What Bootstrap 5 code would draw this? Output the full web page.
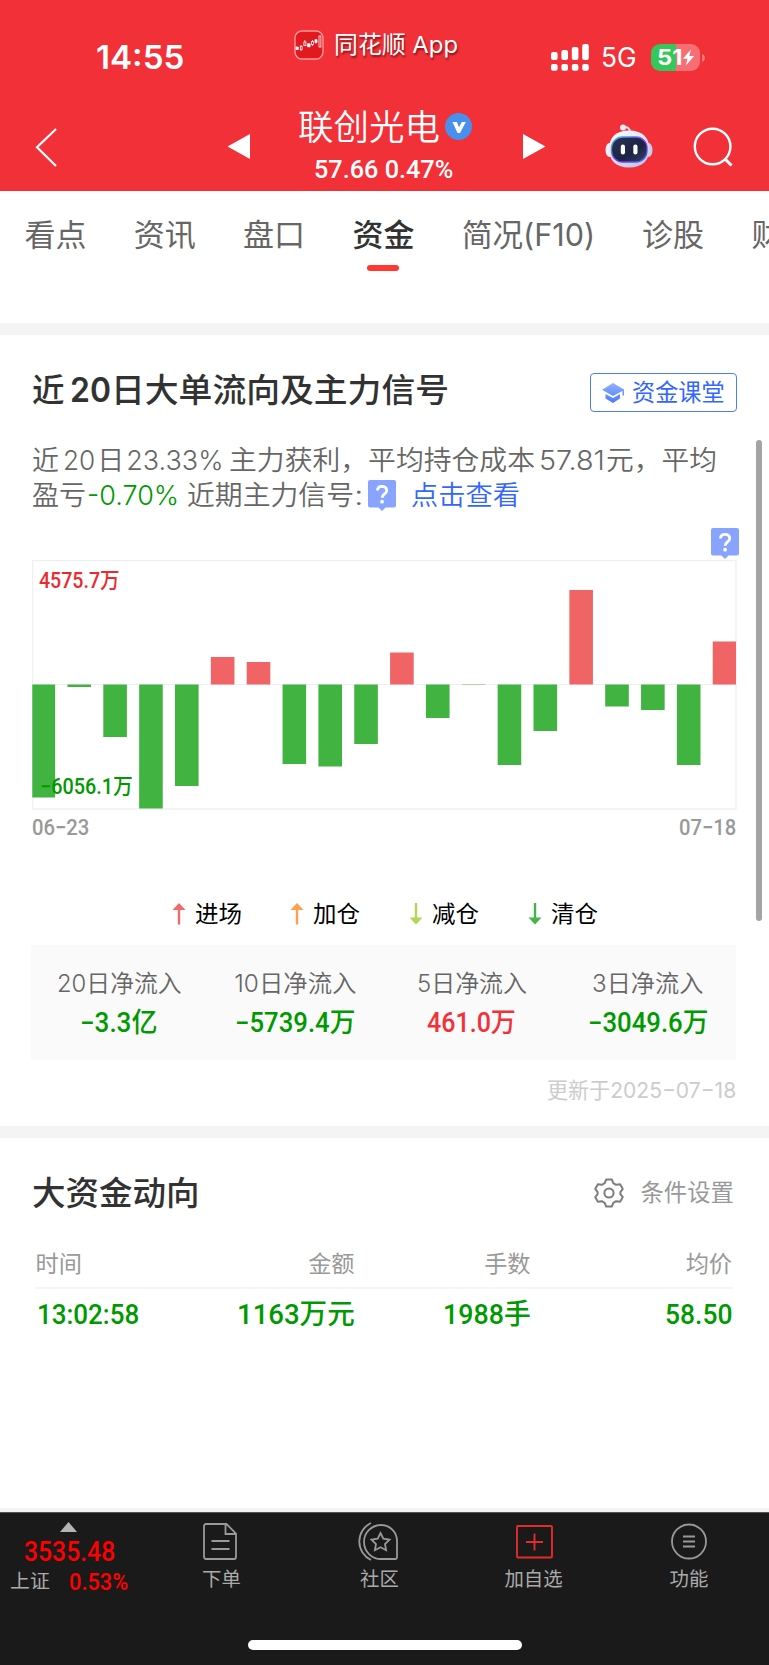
<!DOCTYPE html>
<html lang="zh-CN">
<head>
<meta charset="utf-8">
<meta name="viewport" content="width=device-width, initial-scale=1">
<title>联创光电 - 资金</title>
<link href="https://cdn.jsdelivr.net/npm/bootstrap@5.3.0/dist/css/bootstrap.min.css" rel="stylesheet">
<style>
  :root { --up:#f23038; --down:#009900; --line:#f3f3f3; --link:#3366ff; }
  body { font-family:Inter,"Noto Sans CJK SC",sans-serif; color:#323232; background:#fff; width:769px; height:1665px; overflow:hidden; }
  svg { display:block; flex:none; }
  .din { font-family:Roboto,"Noto Sans CJK SC",sans-serif; font-weight:500; }
  .fit { display:inline-block; white-space:nowrap; line-height:1; }
  .fit > span { display:inline-block; transform-origin:0 50%; }
  .up { color:var(--up); } .down { color:var(--down); }

  .top-area { background:#f23038; height:191px; }
  .status { height:100px; }
  .clock { font-size:32px; font-weight:600; padding:42px 0 0 96px; width:294px; line-height:32px; }
  .app-name { font-size:23.5px; line-height:30px; padding-top:30px; width:257px; text-shadow:1px 2px 2px rgba(60,0,0,.6); }
  .app-name svg { margin-right:9.5px; }
  .net { font-size:27px; line-height:28px; padding-top:44px; }
  .battery { width:49px; height:27px; border-radius:9px; background:linear-gradient(90deg,#34c759 51%,rgba(255,255,255,.3) 51%); font-size:21px; font-weight:700; line-height:27px; margin-left:14px; padding-left:6px; }
  .title-row { height:91px; }
  .title-row > svg { margin-top:3px; }
  .stock { width:273px; }
  .stock-name { font-size:35.5px; font-weight:350; line-height:44px; height:52px; padding:3px 0 0 48px; }
  .quote { font-size:26.5px; height:32px; padding:2px 0 0 64px; }

  .tabs { height:132px; padding:25.5px 0 0 24.5px; gap:47.3px; font-size:31px; color:#666; overflow:hidden; }
  .tabs > div { height:55px; line-height:36px; flex:none; position:relative; }
  .tabs .active { color:#323232; font-weight:500; }
  .tabs .active::after { content:""; display:block; width:32px; height:6px; border-radius:3px; background:#ff3830; margin:12.5px auto 0; }
  .band { height:11.5px; background:#f4f4f4; }

  .flow { height:791.5px; padding:38px 33px 0 32px; }
  .sec-title { font-size:33.5px; font-weight:500; line-height:40px; }
  .flow .sec-title { margin-top:-3px; }
  .course { width:147px; height:39px; border:1.3px solid #4d7bff; border-radius:4px; color:var(--link); font-size:23.4px; padding:1px 0 0 11px; margin-right:-.6px; }
  .summary { height:71px; margin-top:31px; font-size:27px; line-height:35.5px; color:#666; font-weight:350; }
  .summary > div { height:35.5px; }
  .chart { height:250px; margin-top:46.5px; position:relative; }
  .chart .hi, .chart .lo { position:absolute; left:7px; font-size:21.5px; }
  .chart .hi { top:5px; } .chart .lo { top:210.5px; left:8px; }
  .tip { position:absolute; right:-2.5px; top:-32px; }
  .dates { font-size:22px; color:#999; height:28px; margin-top:4px; margin-bottom:1px; }
  .legend { height:30px; margin:57px 0 0 139.5px; font-size:23px; color:#000; }
  .legend > div { width:118.7px; flex:none; gap:9px; }
  .totals { background:#fafafa; height:114.5px; margin-top:16px; padding-top:21.5px; margin-left:-1px; }
  .totals .lbl { font-size:24.4px; line-height:32px; height:34px; color:#666; font-weight:350; }
  .totals .val { font-size:27px; height:36px; padding-top:2px; }
  .updated { color:#ccc; font-size:21.5px; height:30px; margin-top:16.5px; }

  .moves { height:370px; padding:35px 33px 0 32px; }
  .gear-txt { font-size:23.4px; color:#999; margin:0 2px 0 15px; }
  .grid-head { height:47px; margin:29px 3px 0 2.5px; color:#999; font-size:23.2px; border-bottom:2px solid #f6f6f6; padding:1px 1px 1px; }
  .grid-body { font-size:28px; height:51px; color:var(--down); padding:2px 4px 0 3.5px; }
  .c1 { width:143.5px; } .c2 { width:175.5px; } .c3 { width:176px; }

  .dock { background:#1a1a1a; height:153px; color:#aaa; font-size:19.4px; border-top:1px solid #555; position:relative; }
  .index { width:138px; }
  .dock .item { padding-top:9px; }
  .dock .item .cap { line-height:24px; margin-top:5px; }
  .home-bar { position:absolute; left:247.5px; top:126.5px; width:274px; height:10px; border-radius:5px; background:#fff; }
  .scroll-thumb { position:absolute; left:756px; top:439.5px; width:6px; height:481.5px; border-radius:3px; background:#a4a4a4; }
</style>
</head>
<body class="position-relative">

<header class="top-area text-white">
  <div class="status d-flex align-items-start">
    <div class="clock"><span class="fit" data-w="88"><span>14:55</span></span></div>
    <div class="app-name d-flex align-items-center">
      <svg width="30" height="30" viewBox="0 0 30 30"><rect x="1" y="1" width="28" height="28" rx="7" fill="#e2191f" stroke="#f99" stroke-width="1.4"/><g fill="#fff" stroke="#fff" stroke-width=".8"><path d="M2 17h2.3v2.5H2zM13.500 13.800h2.600v3h-2.600zM21 9.600h2v3.200h-2z"/><path d="M7 15v6M10.800 10v6M18.500 10v6" fill="none"/><rect x="6.300" y="16.500" width="1.800" height="3" fill="#e0161d"/><rect x="9.900" y="12" width="2" height="3.600" fill="#e0161d"/><rect x="17.500" y="11.500" width="1.900" height="3" fill="#e0161d"/><rect x="25" y="6" width="1.900" height="11" fill="#e0161d"/></g></svg>
      <span class="fit" data-w="124"><span>同花顺 App</span></span>
    </div>
    <div class="net d-flex align-items-center">
      <svg width="38" height="27" viewBox="0 0 38 27" fill="#fff"><rect x="0" y="8" width="6.600" height="8" rx="2"/><rect x="10.400" y="6" width="6.600" height="10" rx="2"/><rect x="20.800" y="3" width="6.600" height="13" rx="2"/><rect x="31.200" y="0" width="6.600" height="16" rx="2"/><rect x="0" y="20" width="6.600" height="6.800" rx="2"/><rect x="10.400" y="20" width="6.600" height="6.800" rx="2"/><rect x="20.800" y="20" width="6.600" height="6.800" rx="2"/><rect x="31.200" y="20" width="6.600" height="6.800" rx="2"/></svg>
      <span class="fit ms-2 ps-1" data-w="36"><span>5G</span></span>
      <div class="battery d-flex align-items-center"><span class="fit" data-w="25"><span>51</span></span>
        <svg width="13" height="17" viewBox="0 0 13 17"><path d="M9 .5.800 9.800h4.700L3.800 16.500 12.200 7H7.300z" fill="#fff"/></svg></div>
      <svg style="margin-left:2px" width="3" height="8" viewBox="0 0 3 8"><path d="M0 0c4 1.500 4 6.500 0 8z" fill="#fff" fill-opacity=".35"/></svg>
    </div>
  </div>
  <div class="title-row d-flex">
    <svg class="ms-3" width="234" height="80" viewBox="16 103 234 80"><path d="M56 129 37 147.300 56 166" fill="none" stroke="#fff" stroke-width="2.200"/><path d="M227.500 146.500 250 134v25z" fill="#fff"/></svg>
    <div class="stock">
      <div class="stock-name d-flex align-items-center"><span class="fit" data-w="142"><span>联创光电</span></span>
        <svg style="margin:-2px 0 0 5px" width="27" height="27" viewBox="0 0 27 27"><circle cx="13.500" cy="13.500" r="13.500" fill="#4890ec"/><path d="M7.500 9h4.300l2.200 5.300L16.800 9h4L15 20h-2.500z" fill="#fff"/></svg></div>
      <div class="quote din d-flex align-items-center"><span class="fit" data-w="139"><span>57.66 0.47%</span></span></div>
    </div>
    <svg width="230" height="80" viewBox="523 103 230 80">
      <defs><linearGradient id="face" x2="1" y2="1"><stop offset="0" stop-color="#2c3558"/><stop offset=".6" stop-color="#1b2342"/><stop offset="1" stop-color="#39436c"/></linearGradient><linearGradient id="ring" x2="1" y2="1"><stop stop-color="#41c8d8"/><stop offset=".6" stop-color="#7b30e8"/><stop offset="1" stop-color="#3a6cf0"/></linearGradient><linearGradient id="shell" x2=".6" y2="1"><stop stop-color="#fff"/><stop offset="1" stop-color="#c7c9e8"/></linearGradient></defs>
      <path d="M523 134v25l22.500-12.500z" fill="#fff"/>
      <path d="M623 127c4-.5 7 1 7.500 6" fill="none" stroke="#dfe0f3" stroke-width="2"/><circle cx="623" cy="127.500" r="3" fill="#eceaf7"/>
      <ellipse cx="609.500" cy="150" rx="4" ry="7" fill="#efeffb"/><ellipse cx="648.500" cy="150" rx="4" ry="7" fill="#c9cbea"/>
      <path d="M629 130.500c14 0 20.500 8 20.500 18.500s-6.500 18.500-20.500 18.500-20-8-20-18.500 6-18.500 20-18.500z" fill="url(#shell)"/>
      <rect x="611.500" y="137" width="35.500" height="25" rx="11" fill="url(#face)" stroke="url(#ring)" stroke-width="1.300"/>
      <rect x="620.800" y="144.500" width="4.200" height="10" rx="2.100" fill="#fff"/><rect x="633.300" y="144.500" width="4.200" height="10" rx="2.100" fill="#fff"/>
      <circle cx="712.600" cy="146.500" r="17.800" fill="none" stroke="#fff" stroke-width="2.400"/><path d="m724.500 158.500 7 7" stroke="#fff" stroke-width="3"/>
    </svg>
  </div>
</header>

<nav class="tabs d-flex">
  <div>看点</div><div>资讯</div><div>盘口</div><div class="active">资金</div><div><span class="fit" data-w="133"><span>简况(F10)</span></span></div><div>诊股</div><div>财务</div>
</nav>
<div class="band"></div>

<section class="flow">
  <div class="d-flex justify-content-between">
    <div class="sec-title d-flex align-items-center"><span class="fit" data-w="33"><span>近</span></span><span class="fit" style="font-weight:600;margin:0 1px 0 5px" data-w="41"><span>20</span></span><span class="fit" data-w="338"><span>日大单流向及主力信号</span></span></div>
    <div class="course d-flex align-items-center">
      <svg width="22" height="20" viewBox="0 0 22 20"><defs><linearGradient id="cap" x2="0" y2="1"><stop stop-color="#93b0ff"/><stop offset="1" stop-color="#4a7bff"/></linearGradient></defs><path d="M11 0 22 6.500v6h-1.500V8L11 13 0 6.700zM3.500 11l7.500 4 7-4v4.500L11 20l-7.500-4.500z" fill="url(#cap)"/></svg>
      <span class="fit" style="margin-left:8px" data-w="93"><span>资金课堂</span></span>
    </div>
  </div>
  <div class="summary">
    <div class="d-flex align-items-center"><span class="fit" data-w="27"><span>近</span></span><span class="fit" style="margin-left:4px" data-w="32"><span>20</span></span><span class="fit" style="margin-left:2px" data-w="27"><span>日</span></span><span class="fit" data-w="97" style="margin:0 5px 0 2px"><span>23.33%</span></span><span class="fit" data-w="306"><span>主力获利，平均持仓成本</span></span><span class="fit" style="margin-left:4px" data-w="66"><span>57.81</span></span><span class="fit" style="margin-left:2px" data-w="111"><span>元，平均</span></span></div>
    <div class="d-flex align-items-center">
      <span class="fit" data-w="54"><span>盈亏</span></span><span class="fit down" style="margin-left:1px" data-w="92"><span>-0.70%</span></span>
      <span class="fit" style="margin-left:8px" data-w="167"><span>近期主力信号</span></span><span class="fit" data-w="10"><span>:</span></span>
      <svg style="margin-left:4px" width="28" height="31" viewBox="0 0 28 31"><path d="M2 0h24a2 2 0 0 1 2 2v23.500a2 2 0 0 1-2 2h-8.500L14 31l-3.500-3.500H2a2 2 0 0 1-2-2V2a2 2 0 0 1 2-2z" fill="#88a4ff"/><path d="M9.500 10.500C9.500 7.800 11.300 6.300 14 6.300s4.700 1.600 4.700 4.100c0 3.500-4.500 3.600-4.500 7.300" fill="none" stroke="#fff" stroke-width="2.800"/><circle cx="14.100" cy="21.700" r="1.900" fill="#fff"/></svg>
      <span class="fit" style="color:var(--link);margin-left:15px" data-w="109"><span>点击查看</span></span>
    </div>
  </div>

  <div class="chart">
    <svg id="bars" width="705" height="250" viewBox="32 560 705 250"><rect x="32.500" y="560.500" width="703.500" height="248.500" fill="#fff" stroke="#f0f0f0" stroke-width="1.400"/><path d="M32 684.500h704" stroke="#efefef"/></svg>
    <div class="hi din" style="color:#ec2a2e"><span class="fit" data-w="81"><span>4575.7万</span></span></div>
    <div class="lo din down"><span class="fit" data-w="93"><span>−6056.1万</span></span></div>
    <svg class="tip" width="28" height="31" viewBox="0 0 28 31"><path d="M2 0h24a2 2 0 0 1 2 2v23.500a2 2 0 0 1-2 2h-8.500L14 31l-3.500-3.500H2a2 2 0 0 1-2-2V2a2 2 0 0 1 2-2z" fill="#88a4ff"/><path d="M9.500 10.500C9.500 7.800 11.300 6.300 14 6.300s4.700 1.600 4.700 4.100c0 3.500-4.500 3.600-4.500 7.300" fill="none" stroke="#fff" stroke-width="2.800"/><circle cx="14.100" cy="21.700" r="1.900" fill="#fff"/></svg>
  </div>
  <div class="dates din d-flex justify-content-between align-items-center"><span class="fit" data-w="57"><span>06−23</span></span><span class="fit" data-w="57"><span>07−18</span></span></div>

  <div class="legend d-flex">
    <div class="d-flex align-items-center"><svg width="14" height="22" viewBox="0 0 14 22"><path d="M7 0 13.500 7H8.200v14.500H5.800V7H.5z" fill="#f26a6a"/></svg><span class="fit" data-w="47"><span>进场</span></span></div>
    <div class="d-flex align-items-center"><svg width="14" height="22" viewBox="0 0 14 22"><path d="M7 0 13.500 7H8.200v14.500H5.800V7H.5z" fill="#ffa04f"/></svg><span class="fit" data-w="47"><span>加仓</span></span></div>
    <div class="d-flex align-items-center"><svg width="14" height="22" viewBox="0 0 14 22"><path d="M7 21.500.5 14.500h5.300V0h2.400v14.500h5.300z" fill="#b1d850"/></svg><span class="fit" data-w="47"><span>减仓</span></span></div>
    <div class="d-flex align-items-center"><svg width="14" height="22" viewBox="0 0 14 22"><path d="M7 21.500.5 14.500h5.300V0h2.400v14.500h5.300z" fill="#44b544"/></svg><span class="fit" data-w="47"><span>清仓</span></span></div>
  </div>

  <div class="totals row g-0 text-center">
    <div class="col-3"><div class="lbl"><span class="fit" data-w="125"><span>20日净流入</span></span></div><div class="val din down"><span class="fit" data-w="77"><span>−3.3亿</span></span></div></div>
    <div class="col-3"><div class="lbl"><span class="fit" data-w="122"><span>10日净流入</span></span></div><div class="val din down"><span class="fit" data-w="120"><span>−5739.4万</span></span></div></div>
    <div class="col-3"><div class="lbl"><span class="fit" data-w="110"><span>5日净流入</span></span></div><div class="val din up"><span class="fit" data-w="89"><span>461.0万</span></span></div></div>
    <div class="col-3"><div class="lbl"><span class="fit" data-w="111"><span>3日净流入</span></span></div><div class="val din down"><span class="fit" data-w="120"><span>−3049.6万</span></span></div></div>
  </div>
  <div class="updated d-flex justify-content-end align-items-center"><span class="fit" data-w="189"><span>更新于2025−07−18</span></span></div>
</section>
<div class="band"></div>

<section class="moves">
  <div class="d-flex align-items-center">
    <div class="sec-title me-auto"><span class="fit" data-w="168"><span>大资金动向</span></span></div>
    <svg width="32" height="30" viewBox="0 0 32 30" fill="none" stroke="#7d7d7d" stroke-width="2"><path d="M13.200 1.500h5.600l1.500 3.700 2.800 1.600 4-.5 2.700 4.600-2.400 3.200v2l2.400 3-2.700 4.600-4-.5-2.800 1.600-1.500 3.700h-5.600l-1.500-3.700-2.800-1.600-4 .5-2.700-4.600 2.400-3v-2l-2.400-3.200 2.700-4.600 4 .5 2.800-1.600z" stroke-linejoin="round"/><circle cx="16" cy="15" r="4.600"/></svg>
    <span class="gear-txt fit" data-w="94"><span>条件设置</span></span>
  </div>
  <div class="grid-head d-flex align-items-center"><span class="c1">时间</span><span class="c2 text-end">金额</span><span class="c3 text-end">手数</span><span class="flex-fill text-end">均价</span></div>
  <div class="grid-body din d-flex align-items-center">
    <span class="c1"><span class="fit" style="margin-left:1px" data-w="102"><span>13:02:58</span></span></span>
    <span class="c2 text-end"><span class="fit" data-w="118"><span>1163万元</span></span></span>
    <span class="c3 text-end"><span class="fit" data-w="88"><span>1988手</span></span></span>
    <span class="flex-fill text-end"><span class="fit" data-w="67"><span>58.50</span></span></span>
  </div>
</section>
<div style="height:4.5px;background:#f4f4f4"></div>

<footer class="dock d-flex">
  <div class="index">
    <svg style="margin:9px 0 0 60px" width="17" height="10" viewBox="0 0 17 10"><path d="M8.500 0 17 10H0z" fill="#b5b5b5"/></svg>
    <div class="din" style="color:#f00;font-size:28px;height:32px;padding:6px 0 0 24px;line-height:1"><span class="fit" data-w="91"><span>3535.48</span></span></div>
    <div class="d-flex align-items-center" style="height:30px;padding-left:10px;margin-top:3px"><span class="fit" data-w="40"><span>上证</span></span><span class="fit din" style="color:#f00;font-size:24px;margin-left:19px" data-w="59"><span>0.53%</span></span></div>
  </div>
  <div class="item d-flex flex-column align-items-center" style="width:165px">
    <svg width="38" height="40" viewBox="0 0 38 40" fill="none" stroke="#999" stroke-width="1.800"><path d="M4 2h20.500L34 11.500V35a2 2 0 0 1-2 2H4a2 2 0 0 1-2-2V4a2 2 0 0 1 2-2zM23.500 2v10H34M9.500 19h18M9.500 27h18"/></svg>
    <div class="cap" style="padding-left:2px">下单</div></div>
  <div class="item d-flex flex-column align-items-center" style="width:149px">
    <svg width="40" height="40" viewBox="0 0 40 40" fill="none" stroke="#999" stroke-width="1.800"><path d="M23 3a16 16 0 0 1 16 16v16.500a1.500 1.500 0 0 1-1.500 1.500H23a17 17 0 0 1 0-34zM13 1a20.500 20.500 0 0 0 0 37"/><path d="m22.500 11 2.800 5.700 6.200.9-4.500 4.400 1.100 6.200-5.600-3-5.600 3 1.100-6.200-4.500-4.400 6.200-.9z"/></svg>
    <div class="cap ps-1">社区</div></div>
  <div class="item d-flex flex-column align-items-center" style="width:163px">
    <svg width="40" height="40" viewBox="0 0 40 40" fill="none" stroke="#e32b2b" stroke-width="1.900"><rect x="3" y="4" width="35" height="31.500" rx="1"/><path d="M12 20h17M20.500 11.500v17"/></svg>
    <div class="cap">加自选</div></div>
  <div class="item d-flex flex-column align-items-center" style="width:148px">
    <svg width="40" height="40" viewBox="0 0 40 40" fill="none" stroke="#999" stroke-width="1.800"><circle cx="20" cy="19.500" r="17"/><path d="M14 14.500h12M14 19.500h12M14 24.500h12"/></svg>
    <div class="cap">功能</div></div>
  <div class="home-bar"></div>
</footer>
<div class="scroll-thumb"></div>

<script src="https://cdn.jsdelivr.net/npm/bootstrap@5.3.0/dist/js/bootstrap.bundle.min.js"></script>
<script>
  // Daily net flow, in pixels from the zero line (positive = inflow).
  const flows = [-113,-2.5,-52.5,-124,-101.5,27.5,22.5,-79.5,-82,-59.5,32,-33.5,-.4,-80.5,-46.5,94.5,-22,-25.500,-80.5,43];
  const zero = 684.5, svg = document.getElementById('bars');
  flows.forEach((v, i) => {
    const r = document.createElementNS('http://www.w3.org/2000/svg', 'rect');
    const x = Math.max(32.3, 31.6 + i * 35.85);
    r.setAttribute('x', x);
    r.setAttribute('y', v > 0 ? zero - v : zero);
    r.setAttribute('width', Math.min(23.6, 736 - x) - (i ? 0 : .8));
    r.setAttribute('height', Math.abs(v));
    r.setAttribute('fill', v > 0 ? '#f06466' : '#41b341');
    svg.appendChild(r);
  });
  document.querySelectorAll('.fit').forEach(el => {
    const inner = el.firstElementChild, w = +el.dataset.w;
    const natural = inner.offsetWidth;
    inner.style.transform = 'scaleX(' + w / natural + ')';
    inner.style.marginRight = (w - natural) + 'px';
  });
</script>
</body>
</html>
